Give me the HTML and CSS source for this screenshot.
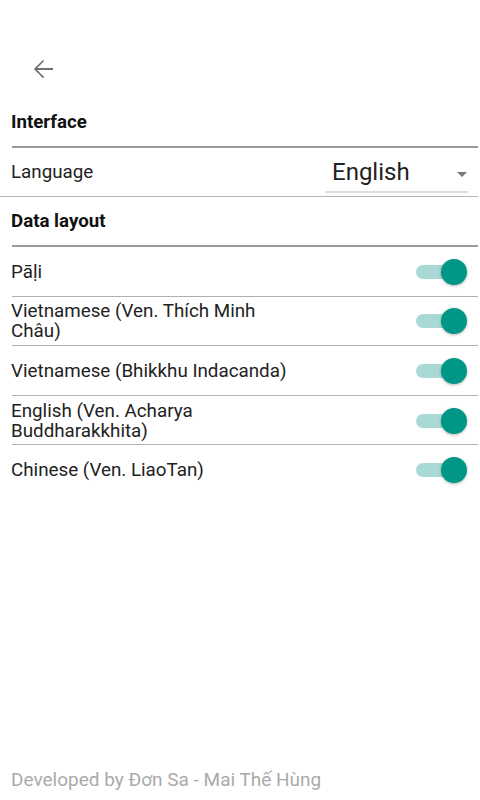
FILE: index.html
```html
<!DOCTYPE html>
<html>
<head>
<meta charset="utf-8">
<link rel="stylesheet" href="styles.css">
</head>
<body>
<div class="page">
  <header class="top">
    <button class="back" aria-label="Back">
      <svg width="30" height="30" viewBox="0 0 24 24"><path d="M20 11.2H7.3l5.6-5.6L12 4.7l-7.3 7.3 7.3 7.3.9-.9-5.6-5.6H20z" fill="#6f6f6f"/></svg>
    </button>
  </header>

  <div class="section-title">Interface</div>
  <div class="row lang-row">
    <span class="label">Language</span>
    <div class="select">
      <span class="select-value">English</span>
      <span class="caret"></span>
    </div>
  </div>

  <div class="section-title">Data layout</div>
  <div class="row item">
    <span class="label">Pāḷi</span>
    <span class="switch"><span class="track"></span><span class="thumb"></span></span>
  </div>
  <div class="row item">
    <span class="label">Vietnamese (Ven. Thích Minh<br>Châu)</span>
    <span class="switch"><span class="track"></span><span class="thumb"></span></span>
  </div>
  <div class="row item">
    <span class="label">Vietnamese (Bhikkhu Indacanda)</span>
    <span class="switch"><span class="track"></span><span class="thumb"></span></span>
  </div>
  <div class="row item">
    <span class="label">English (Ven. Acharya<br>Buddharakkhita)</span>
    <span class="switch"><span class="track"></span><span class="thumb"></span></span>
  </div>
  <div class="row item last">
    <span class="label">Chinese (Ven. LiaoTan)</span>
    <span class="switch"><span class="track"></span><span class="thumb"></span></span>
  </div>

  <footer class="footer">Developed by Đơn Sa - Mai Thế Hùng</footer>
</div>
</body>
</html>
```

FILE: styles.css
```css
* { box-sizing: border-box; }
html, body { margin: 0; padding: 0; background: #fff; }
body { font-family: Roboto, "Noto Sans", "Liberation Sans", sans-serif; color: #222; }
.page { display: flex; flex-direction: column; min-height: 100vh; }
.top { height: 98px; padding: 45px 0 0 19px; }
.back { width: 48px; height: 48px; border: 0; background: none; padding: 0; display: flex; align-items: center; justify-content: center; }
.section-title {
  height: 50px; display: flex; align-items: center;
  padding-left: 11px; padding-bottom: 2px; font-weight: 700; font-size: 18.7px; color: #111;
  margin: 0 2px 0 0; position: relative;
}
.section-title::after {
  content: ""; position: absolute; left: 12px; right: 0; bottom: 0; height: 2px; background: #9a9a9a;
}
.row {
  display: flex; align-items: center; justify-content: space-between;
  padding-left: 11px; font-size: 18.8px; line-height: 20px;
}
.lang-row { height: 49px; border-bottom: 1px solid #b5b5b5; margin-right: 2px; padding-right: 10px; }
.select { width: 143px; height: 36px; margin-top: 6px; display: flex; align-items: center; justify-content: space-between; border-bottom: 2px solid #ddd; padding: 0 1px 4px 7px; }
.select-value { font-size: 24px; color: #222; }
.caret { width: 0; height: 0; border-left: 5.5px solid transparent; border-right: 5.5px solid transparent; border-top: 5px solid #777; margin-top: 4px; }
.item { height: 49.6px; margin-left: 0; margin-right: 2px; padding-right: 11px; position: relative; }
.item::after { content: ""; position: absolute; left: 12px; right: 0; bottom: 0; height: 1px; background: #b0b0b0; }
.item.last::after { display: none; }
.label { color: #222; }
.switch { position: relative; width: 51px; height: 26px; flex: none; }
.track { position: absolute; left: 0; top: 6px; width: 46px; height: 14px; border-radius: 7px; background: #a8d9d4; }
.thumb { position: absolute; right: 0; top: 0; width: 26px; height: 26px; border-radius: 50%; background: #009688; box-shadow: 0 1px 3px rgba(0,0,0,0.3); }
.footer { margin-top: auto; padding: 0 0 10px 11px; font-size: 19px; line-height: 20px; color: #aaa; }
```
